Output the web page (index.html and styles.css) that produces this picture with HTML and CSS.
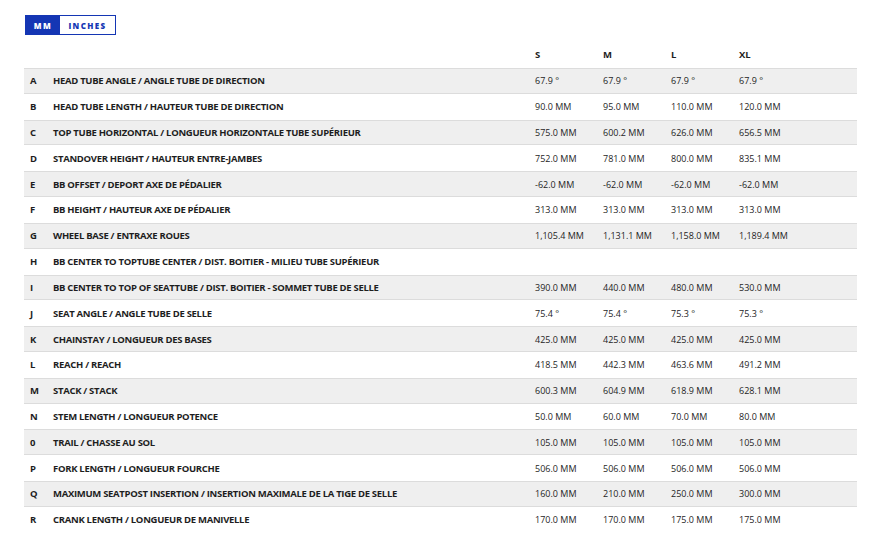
FILE: index.html
```html
<!DOCTYPE html>
<html>
<head>
<meta charset="utf-8">
<link rel="stylesheet" href="styles.css">
</head>
<body>
<div class="page">
  <div class="toggle">
    <span class="seg active">MM</span>
    <span class="seg">INCHES</span>
  </div>
  <div class="geo">
    <div class="row head">
      <span></span><span></span>
      <span class="sz">S</span><span class="sz">M</span><span class="sz">L</span><span class="sz">XL</span>
    </div>
    <div class="row alt"><span class="k">A</span><span class="n">HEAD TUBE ANGLE / ANGLE TUBE DE DIRECTION</span><span>67.9 °</span><span>67.9 °</span><span>67.9 °</span><span>67.9 °</span></div>
    <div class="row"><span class="k">B</span><span class="n">HEAD TUBE LENGTH / HAUTEUR TUBE DE DIRECTION</span><span>90.0 MM</span><span>95.0 MM</span><span>110.0 MM</span><span>120.0 MM</span></div>
    <div class="row alt"><span class="k">C</span><span class="n">TOP TUBE HORIZONTAL / LONGUEUR HORIZONTALE TUBE SUPÉRIEUR</span><span>575.0 MM</span><span>600.2 MM</span><span>626.0 MM</span><span>656.5 MM</span></div>
    <div class="row"><span class="k">D</span><span class="n">STANDOVER HEIGHT / HAUTEUR ENTRE-JAMBES</span><span>752.0 MM</span><span>781.0 MM</span><span>800.0 MM</span><span>835.1 MM</span></div>
    <div class="row alt"><span class="k">E</span><span class="n">BB OFFSET / DEPORT AXE DE PÉDALIER</span><span>-62.0 MM</span><span>-62.0 MM</span><span>-62.0 MM</span><span>-62.0 MM</span></div>
    <div class="row"><span class="k">F</span><span class="n">BB HEIGHT / HAUTEUR AXE DE PÉDALIER</span><span>313.0 MM</span><span>313.0 MM</span><span>313.0 MM</span><span>313.0 MM</span></div>
    <div class="row alt"><span class="k">G</span><span class="n">WHEEL BASE / ENTRAXE ROUES</span><span>1,105.4 MM</span><span>1,131.1 MM</span><span>1,158.0 MM</span><span>1,189.4 MM</span></div>
    <div class="row"><span class="k">H</span><span class="n">BB CENTER TO TOPTUBE CENTER / DIST. BOITIER - MILIEU TUBE SUPÉRIEUR</span><span></span><span></span><span></span><span></span></div>
    <div class="row alt"><span class="k">I</span><span class="n">BB CENTER TO TOP OF SEATTUBE / DIST. BOITIER - SOMMET TUBE DE SELLE</span><span>390.0 MM</span><span>440.0 MM</span><span>480.0 MM</span><span>530.0 MM</span></div>
    <div class="row"><span class="k">J</span><span class="n">SEAT ANGLE / ANGLE TUBE DE SELLE</span><span>75.4 °</span><span>75.4 °</span><span>75.3 °</span><span>75.3 °</span></div>
    <div class="row alt"><span class="k">K</span><span class="n">CHAINSTAY / LONGUEUR DES BASES</span><span>425.0 MM</span><span>425.0 MM</span><span>425.0 MM</span><span>425.0 MM</span></div>
    <div class="row"><span class="k">L</span><span class="n">REACH / REACH</span><span>418.5 MM</span><span>442.3 MM</span><span>463.6 MM</span><span>491.2 MM</span></div>
    <div class="row alt"><span class="k">M</span><span class="n">STACK / STACK</span><span>600.3 MM</span><span>604.9 MM</span><span>618.9 MM</span><span>628.1 MM</span></div>
    <div class="row"><span class="k">N</span><span class="n">STEM LENGTH / LONGUEUR POTENCE</span><span>50.0 MM</span><span>60.0 MM</span><span>70.0 MM</span><span>80.0 MM</span></div>
    <div class="row alt"><span class="k">0</span><span class="n">TRAIL / CHASSE AU SOL</span><span>105.0 MM</span><span>105.0 MM</span><span>105.0 MM</span><span>105.0 MM</span></div>
    <div class="row"><span class="k">P</span><span class="n">FORK LENGTH / LONGUEUR FOURCHE</span><span>506.0 MM</span><span>506.0 MM</span><span>506.0 MM</span><span>506.0 MM</span></div>
    <div class="row alt"><span class="k">Q</span><span class="n">MAXIMUM SEATPOST INSERTION / INSERTION MAXIMALE DE LA TIGE DE SELLE</span><span>160.0 MM</span><span>210.0 MM</span><span>250.0 MM</span><span>300.0 MM</span></div>
    <div class="row"><span class="k">R</span><span class="n">CRANK LENGTH / LONGUEUR DE MANIVELLE</span><span>170.0 MM</span><span>170.0 MM</span><span>175.0 MM</span><span>175.0 MM</span></div>
  </div>
</div>
</body>
</html>
```
FILE: styles.css
```css
html, body {
  margin: 0;
  padding: 0;
  background: #fff;
}
.page {
  padding: 15px 22px 0 24px;
  font-family: "Open Sans", "Liberation Sans", sans-serif;
  color: #1e1e1e;
}
.toggle {
  display: flex;
  width: fit-content;
  margin-left: 1px;
  border: 1px solid #1436b4;
  height: 18px;
}
.seg {
  display: flex;
  align-items: center;
  justify-content: center;
  font-size: 8px;
  font-weight: 800;
  letter-spacing: 1.4px;
  color: #1436b4;
  background: #fff;
}
.seg:first-child { width: 34px; }
.seg:last-child { width: 55px; }
.seg.active {
  background: #1436b4;
  color: #fff;
}
.geo {
  margin-top: 6px;
}
.row {
  display: grid;
  grid-template-columns: 29px 482px 68px 68px 68px 1fr;
  align-items: center;
  height: 25.82px;
  box-sizing: border-box;
  font-size: 9px;
  white-space: nowrap;
}
.row > span:first-child { padding-left: 6px; }
.row.head {
  height: 27px;
  font-weight: 700;
}
.row.alt {
  background: #efefef;
  border-top: 1px solid #dcdcdc;
  border-bottom: 1px solid #dcdcdc;
}
.k, .n {
  font-weight: 700;
  font-size: 9.5px;
  letter-spacing: -0.3px;
}
.sz { font-weight: 700; font-size: 9.5px; }
```
